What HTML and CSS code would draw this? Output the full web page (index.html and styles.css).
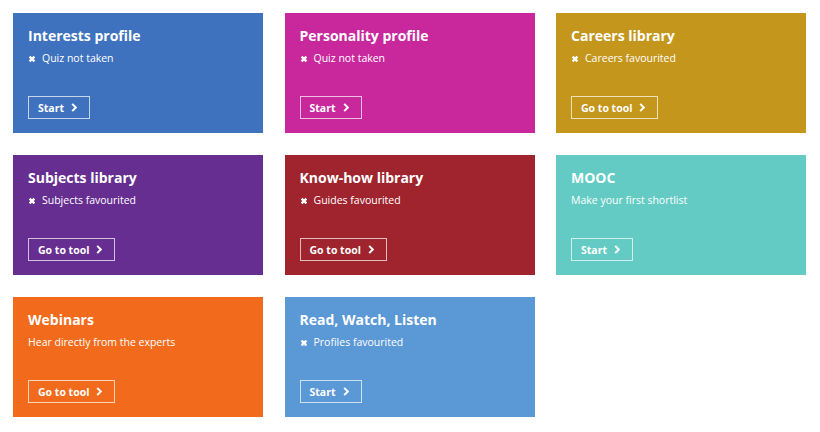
FILE: index.html
```html
<!DOCTYPE html>
<html lang="en">
<head>
    <meta charset="UTF-8">
    <meta name="viewport" content="width=device-width, initial-scale=1.0">
    <title>My tools</title>
    <link rel="stylesheet" href="styles.css">
</head>
<body>
    <div class="tools">
        <div class="tool blue">
            <h3>Interests profile</h3>
            <p class="status"><svg class="cross" viewBox="0 0 10 10"><path d="M2 2L8 8M8 2L2 8"/></svg>Quiz not taken</p>
            <a class="btn" href="#">Start<svg class="chev" viewBox="0 0 6 10"><path d="M1 1L5 5L1 9"/></svg></a>
        </div>
        <div class="tool magenta">
            <h3>Personality profile</h3>
            <p class="status"><svg class="cross" viewBox="0 0 10 10"><path d="M2 2L8 8M8 2L2 8"/></svg>Quiz not taken</p>
            <a class="btn" href="#">Start<svg class="chev" viewBox="0 0 6 10"><path d="M1 1L5 5L1 9"/></svg></a>
        </div>
        <div class="tool gold">
            <h3>Careers library</h3>
            <p class="status"><svg class="cross" viewBox="0 0 10 10"><path d="M2 2L8 8M8 2L2 8"/></svg>Careers favourited</p>
            <a class="btn" href="#">Go to tool<svg class="chev" viewBox="0 0 6 10"><path d="M1 1L5 5L1 9"/></svg></a>
        </div>
        <div class="tool purple">
            <h3>Subjects library</h3>
            <p class="status"><svg class="cross" viewBox="0 0 10 10"><path d="M2 2L8 8M8 2L2 8"/></svg>Subjects favourited</p>
            <a class="btn" href="#">Go to tool<svg class="chev" viewBox="0 0 6 10"><path d="M1 1L5 5L1 9"/></svg></a>
        </div>
        <div class="tool red">
            <h3>Know-how library</h3>
            <p class="status"><svg class="cross" viewBox="0 0 10 10"><path d="M2 2L8 8M8 2L2 8"/></svg>Guides favourited</p>
            <a class="btn" href="#">Go to tool<svg class="chev" viewBox="0 0 6 10"><path d="M1 1L5 5L1 9"/></svg></a>
        </div>
        <div class="tool teal">
            <h3>MOOC</h3>
            <p class="status">Make your first shortlist</p>
            <a class="btn" href="#">Start<svg class="chev" viewBox="0 0 6 10"><path d="M1 1L5 5L1 9"/></svg></a>
        </div>
        <div class="tool orange">
            <h3>Webinars</h3>
            <p class="status">Hear directly from the experts</p>
            <a class="btn" href="#">Go to tool<svg class="chev" viewBox="0 0 6 10"><path d="M1 1L5 5L1 9"/></svg></a>
        </div>
        <div class="tool sky">
            <h3>Read, Watch, Listen</h3>
            <p class="status"><svg class="cross" viewBox="0 0 10 10"><path d="M2 2L8 8M8 2L2 8"/></svg>Profiles favourited</p>
            <a class="btn" href="#">Start<svg class="chev" viewBox="0 0 6 10"><path d="M1 1L5 5L1 9"/></svg></a>
        </div>
    </div>
</body>
</html>
```

FILE: styles.css
```css
body {
    font-family: "Open Sans", Arial, sans-serif;
    margin: 0;
    padding: 13px;
    background-color: #fff;
    color: #fff;
}

.tools {
    display: grid;
    grid-template-columns: repeat(3, 250px);
    column-gap: 21.5px;
    row-gap: 22px;
}

.tool {
    height: 120px;
    box-sizing: border-box;
    padding: 13px 15px 14px 15px;
    display: flex;
    flex-direction: column;
    align-items: flex-start;
}

.tool h3 {
    margin: 0;
    font-size: 14px;
    font-weight: 700;
    line-height: 19px;
}

.status {
    margin: 6px 0 0 0;
    font-size: 10.5px;
    line-height: 15px;
    display: flex;
    align-items: center;
}

.cross {
    width: 8px;
    height: 8px;
    margin-right: 6px;
    fill: none;
    stroke: #fff;
    stroke-width: 3;
}

.btn {
    margin-top: auto;
    display: inline-flex;
    align-items: center;
    padding: 0 12px 0 9px;
    height: 23px;
    box-sizing: border-box;
    border: 1px solid rgba(255, 255, 255, 0.7);
    color: #fff;
    text-decoration: none;
    font-size: 10.5px;
    font-weight: 700;
}

.chev {
    width: 6px;
    height: 9px;
    margin-left: 7px;
    fill: none;
    stroke: #fff;
    stroke-width: 2.2;
}

.blue { background-color: #3e72be; }
.magenta { background-color: #c9289d; }
.gold { background-color: #c4961c; }
.purple { background-color: #662e91; }
.red { background-color: #9f242e; }
.teal { background-color: #63cbc3; }
.orange { background-color: #f26a1b; }
.sky { background-color: #5b98d6; }
```
